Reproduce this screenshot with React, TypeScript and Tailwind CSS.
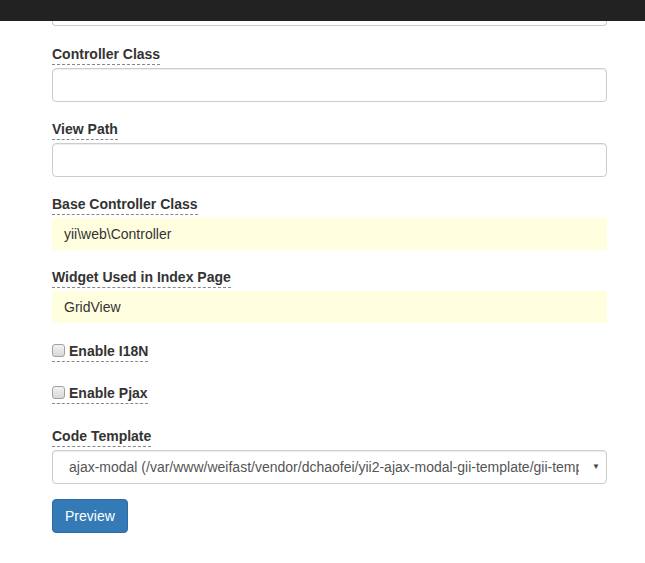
import React from "react";

const font = { fontFamily: '"Liberation Sans", Arial, sans-serif' };

function FieldLabel({ children }: { children: React.ReactNode }) {
  return (
    <div className="h-[21px]">
      <span className="inline-block h-[21px] border-b border-dashed border-[#888] text-[14px] font-bold leading-[20px] text-[#333]">
        {children}
      </span>
    </div>
  );
}

function TextInput() {
  return (
    <input
      type="text"
      className="block h-[34px] w-full rounded-[4px] border border-[#ccc] bg-white px-3 text-[14px] text-[#555] shadow-[inset_0_1px_1px_rgba(0,0,0,0.075)] outline-none"
    />
  );
}

function StickyValue({ value }: { value: string }) {
  return (
    <div className="h-[32px] bg-[#ffffe0] px-3 text-[14px] leading-[32px] text-[#333]">{value}</div>
  );
}

function CheckRow({ label }: { label: string }) {
  return (
    <div className="h-[21px]">
      <label className="inline-flex h-[21px] items-center gap-[4px] border-b border-dashed border-[#888] text-[14px] font-bold leading-[20px] text-[#333]">
        <input
          type="checkbox"
          className="m-0 h-[13px] w-[13px] appearance-none rounded-[3px] border border-[#a0a0a0] bg-gradient-to-b from-[#f2f2f2] to-[#d8d8d8]"
        />
        {label}
      </label>
    </div>
  );
}

export default function App() {
  return (
    <div className="min-h-[563px] w-[645px] bg-white" style={font}>
      <div className="h-[21px] bg-[#222]" />
      <div className="pl-[52px] pr-[38px]">
        <div className="h-[5px] rounded-b-[4px] border-x border-b border-[#ccc]" />

        <div className="mt-[16px]">
          <FieldLabel>Controller Class</FieldLabel>
          <div className="mt-[5px]">
            <TextInput />
          </div>
        </div>

        <div className="mt-[15px]">
          <FieldLabel>View Path</FieldLabel>
          <div className="mt-[5px]">
            <TextInput />
          </div>
        </div>

        <div className="mt-[15px]">
          <FieldLabel>Base Controller Class</FieldLabel>
          <div className="mt-[5px]">
            <StickyValue value="yii\web\Controller" />
          </div>
        </div>

        <div className="mt-[15px]">
          <FieldLabel>Widget Used in Index Page</FieldLabel>
          <div className="mt-[5px]">
            <StickyValue value="GridView" />
          </div>
        </div>

        <div className="mt-[17px]">
          <CheckRow label="Enable I18N" />
        </div>

        <div className="mt-[21px]">
          <CheckRow label="Enable Pjax" />
        </div>

        <div className="mt-[21px]">
          <FieldLabel>Code Template</FieldLabel>
          <div className="mt-[5px] flex h-[34px] items-center rounded-[4px] border border-[#ccc] bg-white pl-[16px] text-[14px] text-[#555] shadow-[inset_0_1px_1px_rgba(0,0,0,0.075)]">
            <div className="min-w-0 flex-1 overflow-hidden whitespace-nowrap">
              ajax-modal (/var/www/weifast/vendor/dchaofei/yii2-ajax-modal-gii-template/gii-templates/crud/default)
            </div>
            <span className="w-[27px] pr-[6px] text-right text-[8px] text-[#444]">▼</span>
          </div>
        </div>

        <button
          type="button"
          className="mt-[15px] h-[34px] rounded-[4px] border border-[#2e6da4] bg-[#337ab7] px-3 text-[14px] text-white"
        >
          Preview
        </button>
      </div>
    </div>
  );
}
